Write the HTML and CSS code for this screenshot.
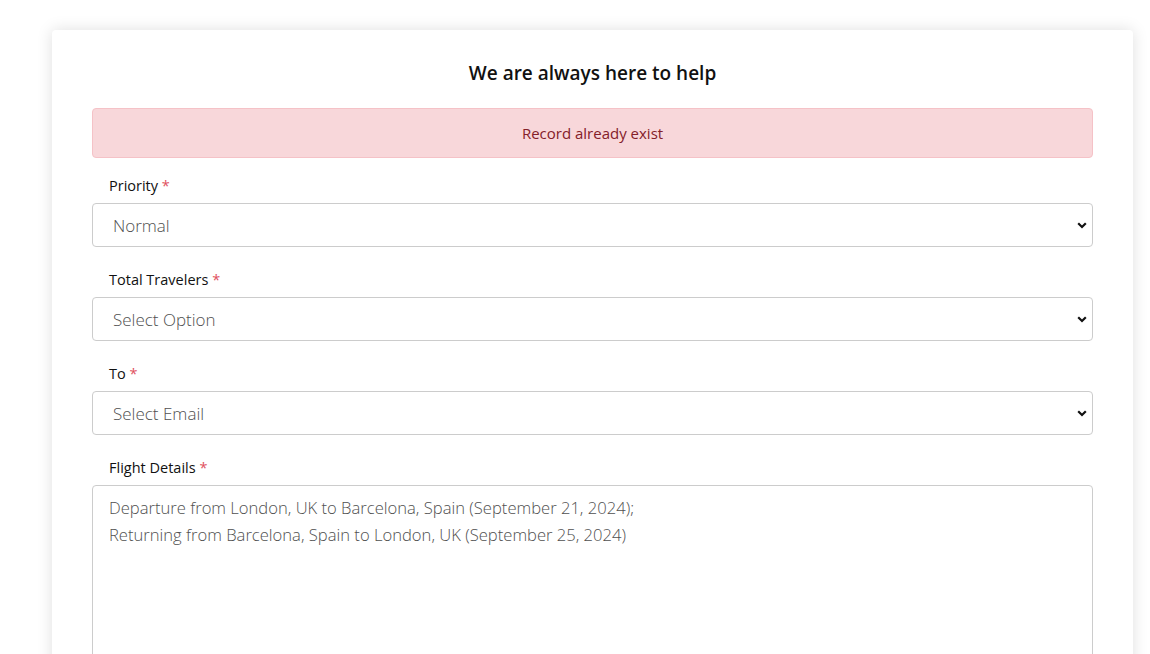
FILE: index.html
```html
<!DOCTYPE html>
<html lang="en">
<head>
<meta charset="utf-8">
<title>Help</title>
<link rel="stylesheet" href="styles.css">
</head>
<body>
<div class="card">
  <h2 class="title">We are always here to help</h2>
  <div class="alert">Record already exist</div>

  <div class="group">
    <label class="label">Priority <span class="req">*</span></label>
    <div class="select-wrap">
      <select class="control"><option>Normal</option></select>
      <svg class="chev" width="10" height="7" viewBox="0 0 10 7"><path d="M1.2 1.2 L5 5 L8.8 1.2" fill="none" stroke="#111" stroke-width="2.2"/></svg>
    </div>
  </div>

  <div class="group">
    <label class="label">Total Travelers <span class="req">*</span></label>
    <div class="select-wrap">
      <select class="control"><option>Select Option</option></select>
      <svg class="chev" width="10" height="7" viewBox="0 0 10 7"><path d="M1.2 1.2 L5 5 L8.8 1.2" fill="none" stroke="#111" stroke-width="2.2"/></svg>
    </div>
  </div>

  <div class="group">
    <label class="label">To <span class="req">*</span></label>
    <div class="select-wrap">
      <select class="control"><option>Select Email</option></select>
      <svg class="chev" width="10" height="7" viewBox="0 0 10 7"><path d="M1.2 1.2 L5 5 L8.8 1.2" fill="none" stroke="#111" stroke-width="2.2"/></svg>
    </div>
  </div>

  <div class="group">
    <label class="label">Flight Details <span class="req">*</span></label>
    <textarea class="area">Departure from London, UK to Barcelona, Spain (September 21, 2024);
Returning from Barcelona, Spain to London, UK (September 25, 2024)</textarea>
  </div>
</div>
</body>
</html>
```

FILE: styles.css
```css
html, body {
  margin: 0;
  padding: 0;
  background: #fff;
  font-family: "Open Sans", "Noto Sans", sans-serif;
  color: #212529;
  overflow: hidden;
}

.card {
  margin: 30px 17px 0 52px;
  padding: 30px 40px 40px;
  background: #fff;
  border-radius: 4px;
  box-shadow: 0 0 16px rgba(0, 0, 0, 0.13);
}

.title {
  margin: 0 0 22px;
  font-size: 19px;
  line-height: 26px;
  font-weight: 600;
  text-align: center;
  color: #111;
}

.alert {
  padding: 12px;
  line-height: 24px;
  font-size: 15px;
  text-align: center;
  background: #f8d7da;
  border: 1px solid #f5c2c7;
  border-radius: 4px;
  color: #842029;
}

.group {
  margin-top: 17px;
}

.group + .group {
  margin-top: 22px;
}

.label {
  display: block;
  padding-left: 17px;
  margin-bottom: 6px;
  font-size: 14.5px;
  line-height: 22px;
  color: #111;
}

.req {
  color: #e0505e;
}

.select-wrap {
  position: relative;
}

.control {
  display: block;
  width: 100%;
  height: 44px;
  box-sizing: border-box;
  padding: 0 20px;
  font-family: inherit;
  font-size: 17px;
  font-weight: 300;
  color: #505050;
  background: #fff;
  border: 1px solid #ccc;
  border-radius: 4px;
  appearance: none;
  -webkit-appearance: none;
}

.chev {
  position: absolute;
  right: 6px;
  top: 19px;
}

.area {
  display: block;
  width: 100%;
  height: 200px;
  box-sizing: border-box;
  padding: 8px 16px;
  font-family: inherit;
  font-size: 16.6px;
  line-height: 27px;
  font-weight: 300;
  color: #505050;
  border: 1px solid #ccc;
  border-radius: 4px;
  resize: none;
}
```
